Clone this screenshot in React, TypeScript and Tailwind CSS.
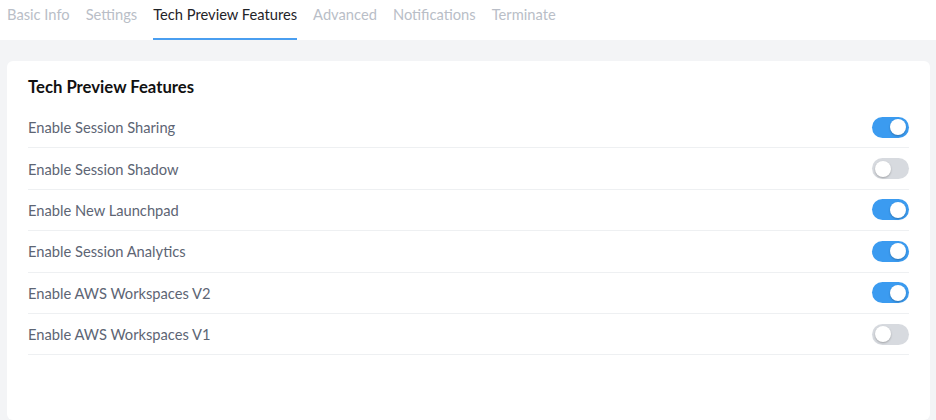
import React from "react";

const tabs = ["Basic Info", "Settings", "Tech Preview Features", "Advanced", "Notifications", "Terminate"];
const rows: [string, boolean][] = [
  ["Enable Session Sharing", true],
  ["Enable Session Shadow", false],
  ["Enable New Launchpad", true],
  ["Enable Session Analytics", true],
  ["Enable AWS Workspaces V2", true],
  ["Enable AWS Workspaces V1", false],
];

function Toggle({ on }: { on: boolean }) {
  return (
    <div
      className={
        on
          ? "w-[37px] h-[21px] rounded-full bg-[#3b9bf0] flex items-center justify-end px-[3px]"
          : "w-[37px] h-[21px] rounded-full bg-[#d7dadf] flex items-center justify-start px-[3px]"
      }
    >
      <div className="w-[16px] h-[16px] rounded-full bg-white shadow-[0_1px_2px_rgba(0,0,0,0.25)]" />
    </div>
  );
}

export default function App() {
  return (
    <div className="w-[936px] h-[420px] overflow-hidden bg-[#f3f4f6] flex flex-col" style={{ fontFamily: "Lato, 'Open Sans', sans-serif" }}>
      <div className="h-[40px] bg-white flex items-stretch pl-[7px] gap-[16px] shrink-0">
        {tabs.map((t) => (
          <div
            key={t}
            className={
              t === "Tech Preview Features"
                ? "pt-[4px] text-[14.7px] leading-[20px] text-[#1f2328] border-b-2 border-[#4a9ef0] h-[40px]"
                : "pt-[4px] text-[14.7px] leading-[20px] text-[#b9bec7] border-b-2 border-transparent h-[40px]"
            }
          >
            {t}
          </div>
        ))}
      </div>
      <div className="flex-1 pt-[21px] pl-[7px] pr-[6px]">
        <div className="bg-white rounded-[6px] h-full px-[21px] pt-[16px]">
          <div className="text-[16.7px] leading-[20px] font-bold text-[#111] mb-[10px]">Tech Preview Features</div>
          {rows.map(([label, on]) => (
            <div key={label} className="h-[41.4px] border-b border-[#eef0f2] flex items-center justify-between">
              <span className="text-[14.7px] text-[#5d6574]">{label}</span>
              <Toggle on={on} />
            </div>
          ))}
        </div>
      </div>
    </div>
  );
}
